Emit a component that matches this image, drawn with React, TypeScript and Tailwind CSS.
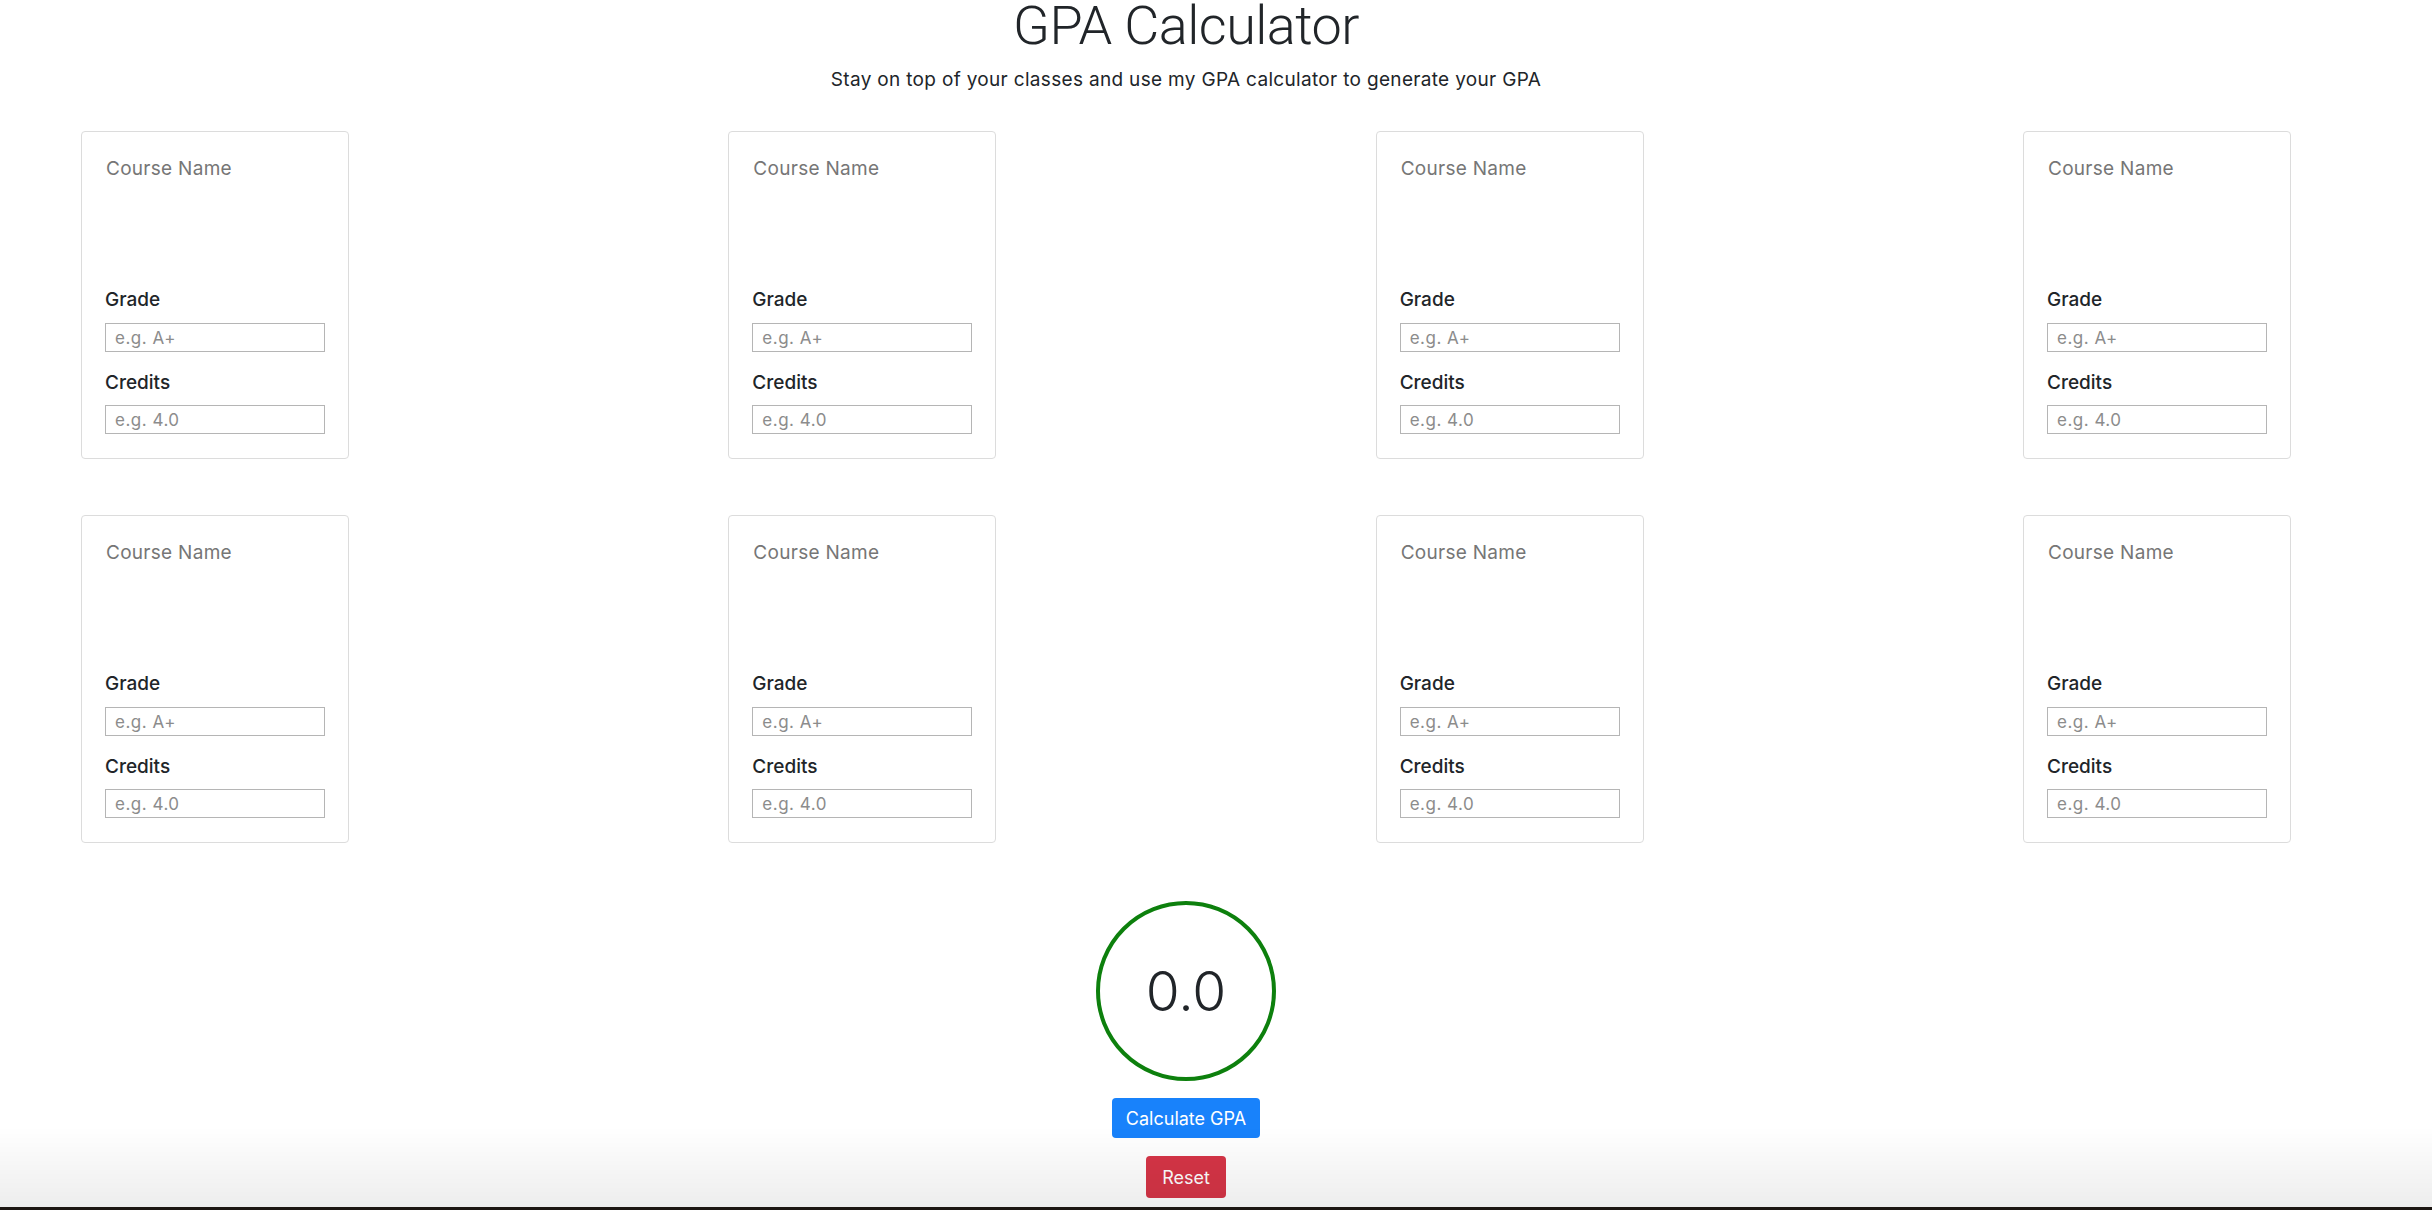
import React from "react";

const fieldLabel = "block text-[19px] leading-[28px] font-medium text-[#212529]";
const fieldInput = "block h-[29px] w-full border border-[#b5b5b5] bg-white px-[9px] text-[17px] tracking-[0.03em] text-[#212529] placeholder:text-[#8c8c8c] outline-none";

const CourseCard: React.FunctionComponent = () => {
  return (
    <div className="w-[268px] rounded-[4px] border border-[#dcdcdc] px-[23px] pt-[23px] pb-[24px]">
      <textarea
        placeholder="Course Name"
        className="block h-[131px] w-full resize-none bg-transparent p-0 pl-[1px] text-[19px] leading-[28px] tracking-[0.015em] text-[#212529] placeholder:text-[#767676] outline-none"
      />
      <label className={fieldLabel}>Grade</label>
      <input className={`mt-[9px] ${fieldInput}`} placeholder="e.g. A+" />
      <label className={`mt-[17px] ${fieldLabel}`}>Credits</label>
      <input className={`mt-[8px] ${fieldInput}`} placeholder="e.g. 4.0" />
    </div>
  );
};

const CardRow: React.FunctionComponent = () => (
  <div className="flex justify-between">
    <CourseCard />
    <CourseCard />
    <CourseCard />
    <CourseCard />
  </div>
);

export default function App() {
  const [gpa] = React.useState("0.0");

  return (
    <div className="min-h-[1210px] bg-white" style={{fontFamily: "Inter, 'Noto Sans', sans-serif"}}>
      <main className="w-[2372px] px-[81px]">
        <header className="flex flex-col items-center">
          <h1 className="text-[54px] leading-[52px] font-light tracking-[-0.01em] text-[#212529]" style={{fontFamily: "Roboto, 'Liberation Sans', sans-serif"}}>
            GPA Calculator
          </h1>
          <p className="mt-[14px] text-[19px] leading-[28px] tracking-[0.017em] text-[#212529]">
            Stay on top of your classes and use my GPA calculator to generate your GPA
          </p>
        </header>

        <section className="mt-[37px] flex flex-col gap-[56px]">
          <CardRow />
          <CardRow />
        </section>

        <section className="mt-[58px] flex flex-col items-center">
          <div className="flex h-[180px] w-[180px] items-center justify-center rounded-full border-[4px] border-[#0d800d]">
            <span className="text-[55px] leading-none font-light text-[#212529]">{gpa}</span>
          </div>
          <button type="button" className="mt-[17px] h-[40px] rounded-[4px] bg-[#1882fb] px-[14px] text-[18px] text-white">
            Calculate GPA
          </button>
          <button type="button" className="mt-[18px] h-[42px] rounded-[4px] bg-[#d63547] px-[16px] text-[18px] text-white">
            Reset
          </button>
        </section>
      </main>

      <div className="pointer-events-none fixed inset-x-0 bottom-0">
        <div className="h-[80px] bg-linear-to-b from-transparent to-black/[0.07]" />
        <div className="h-[3px] bg-[#1c1612]" />
      </div>
    </div>
  );
}
